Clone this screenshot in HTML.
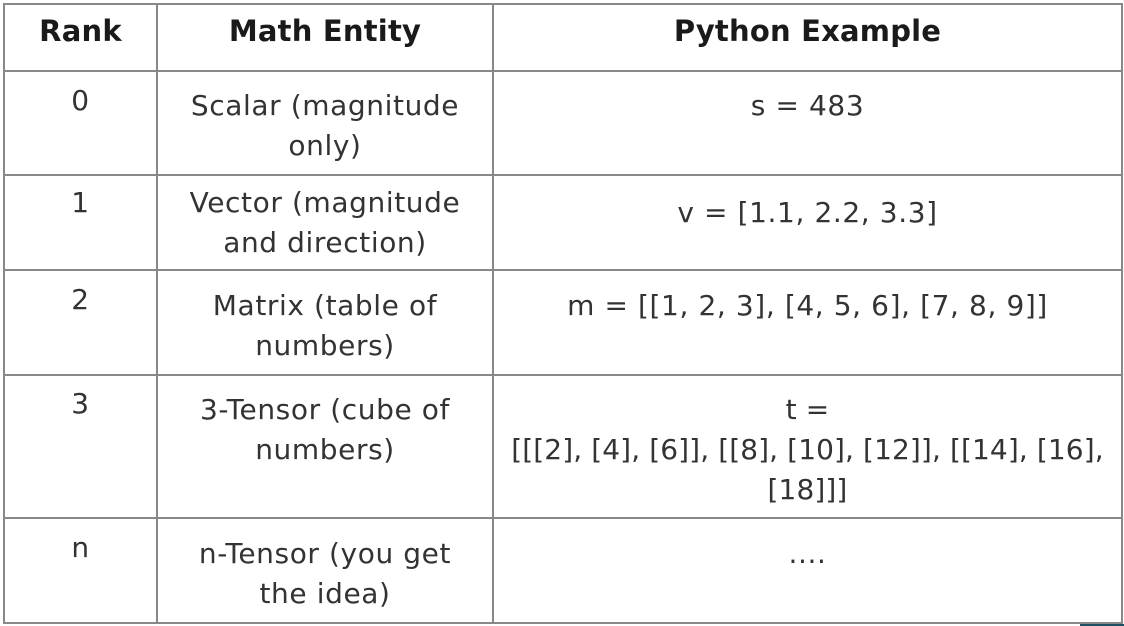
<!DOCTYPE html><html><head><style>
body{margin:0;width:1124px;height:626px;background:#fff;position:relative;overflow:hidden;font-family:"DejaVu Sans","Liberation Sans",sans-serif;color:#333}
.h{position:absolute;background:#888}
.c{position:absolute;text-align:center;font-size:28px;line-height:40px;letter-spacing:0.6px;white-space:nowrap}
.b{font-weight:bold;color:#1a1a1a;font-size:29px;letter-spacing:0.2px}
</style></head><body>
<div class="h" style="left:3px;top:3px;width:1120px;height:2px"></div>
<div class="h" style="left:3px;top:70px;width:1120px;height:2px"></div>
<div class="h" style="left:3px;top:174px;width:1120px;height:2px"></div>
<div class="h" style="left:3px;top:269px;width:1120px;height:2px"></div>
<div class="h" style="left:3px;top:374px;width:1120px;height:2px"></div>
<div class="h" style="left:3px;top:517px;width:1120px;height:2px"></div>
<div class="h" style="left:3px;top:622px;width:1120px;height:2px"></div>
<div class="h" style="left:3px;top:3px;width:2px;height:621px"></div>
<div class="h" style="left:156px;top:3px;width:2px;height:621px"></div>
<div class="h" style="left:492px;top:3px;width:2px;height:621px"></div>
<div class="h" style="left:1121px;top:3px;width:2px;height:621px"></div>
<div style="position:absolute;left:1080px;top:624px;width:44px;height:2px;background:#1f4f63"></div>

<div class="c b" style="left:5px;width:151px;top:11px">Rank</div>
<div class="c b" style="left:158px;width:334px;top:11px">Math Entity</div>
<div class="c b" style="left:494px;width:627px;top:11px">Python Example</div>

<div class="c" style="left:5px;width:151px;top:81px">0</div>
<div class="c" style="left:158px;width:334px;top:86px">Scalar (magnitude<br>only)</div>
<div class="c" style="left:494px;width:627px;top:86px">s = 483</div>

<div class="c" style="left:5px;width:151px;top:183px">1</div>
<div class="c" style="left:158px;width:334px;top:183px">Vector (magnitude<br>and direction)</div>
<div class="c" style="left:494px;width:627px;top:193px">v = [1.1, 2.2, 3.3]</div>

<div class="c" style="left:5px;width:151px;top:280px">2</div>
<div class="c" style="left:158px;width:334px;top:286px">Matrix (table of<br>numbers)</div>
<div class="c" style="left:494px;width:627px;top:286px">m = [[1, 2, 3], [4, 5, 6], [7, 8, 9]]</div>

<div class="c" style="left:5px;width:151px;top:384px">3</div>
<div class="c" style="left:158px;width:334px;top:390px">3-Tensor (cube of<br>numbers)</div>
<div class="c" style="left:494px;width:627px;top:390px;letter-spacing:0.1px">t =<br>[[[2], [4], [6]], [[8], [10], [12]], [[14], [16],<br>[18]]]</div>

<div class="c" style="left:5px;width:151px;top:528px">n</div>
<div class="c" style="left:158px;width:334px;top:534px">n-Tensor (you get<br>the idea)</div>
<div class="c" style="left:494px;width:627px;top:534px">....</div>
</body></html>
